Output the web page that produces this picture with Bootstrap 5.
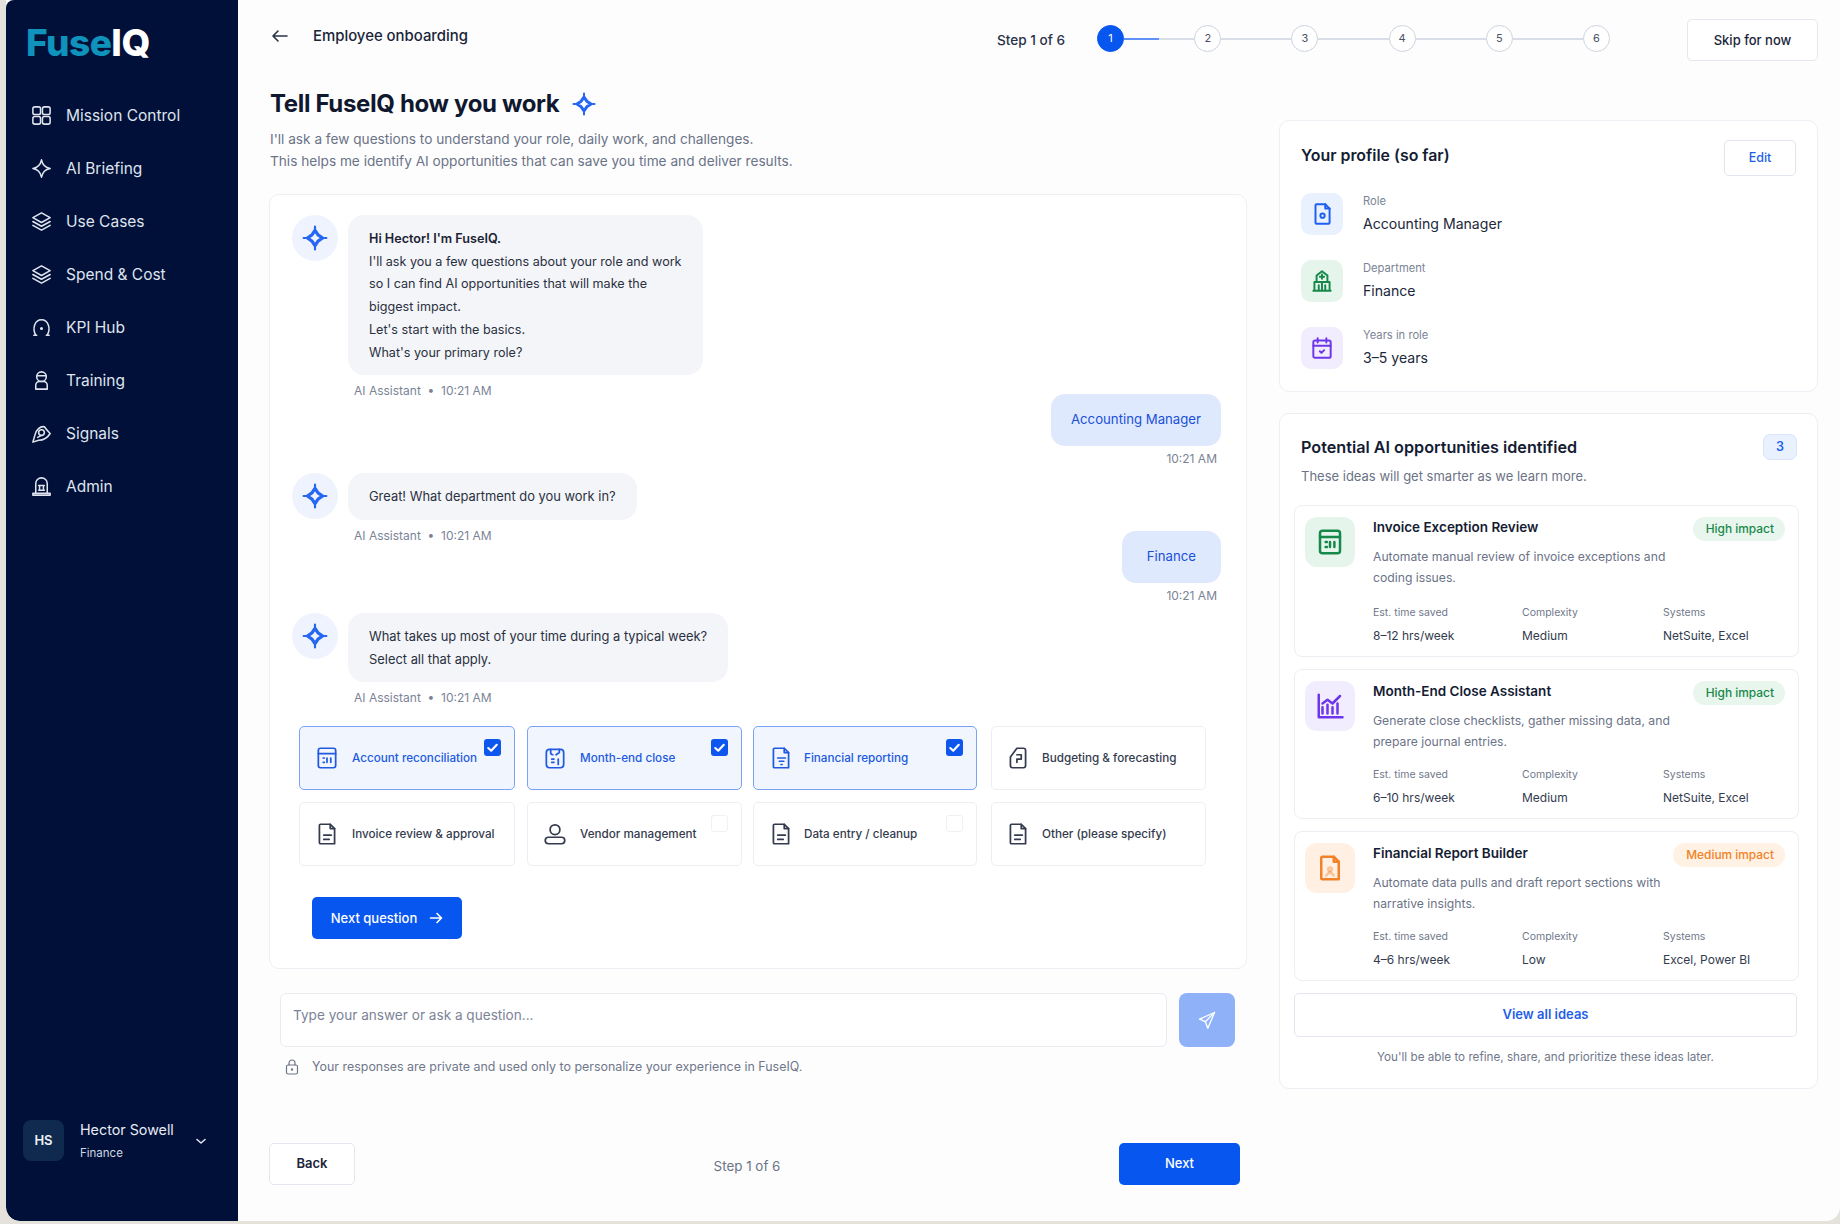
<!DOCTYPE html>
<html lang="en">
<head>
<meta charset="UTF-8" />
<meta name="viewport" content="width=device-width, initial-scale=1.0" />
<title>FuseIQ - Employee onboarding</title>
<link rel="stylesheet" href="https://cdn.jsdelivr.net/npm/bootstrap@5.3.5/dist/css/bootstrap.min.css" />
<script src="https://cdn.jsdelivr.net/npm/bootstrap@5.3.5/dist/js/bootstrap.bundle.min.js"></script>
<style>
  html, body { height: 100%; }
  body { background: #e4e2db; font-family: Inter, "Liberation Sans", sans-serif; color: #111a33; overflow: hidden; }
  svg.ico { fill: none; stroke: currentColor; stroke-width: 1.6; stroke-linecap: round; stroke-linejoin: round; flex: none; }

  .app-shell { margin-left: 6px; height: 1221px; border-radius: 0 0 14px 14px; overflow: hidden; background: #fdfdfe; }
  .side { width: 232px; flex: none; background: #011038; color: #dfe4ee; border-radius: 8px 0 0 14px; padding: 23px 0 0 21px; }
  .logo-text { font-size: 37px; line-height: 40px; font-weight: 800; letter-spacing: -.5px; margin: 0 0 26px -1px; }
  .logo-fuse { color: #0f93bd; }
  .logo-iq { color: #fff; }
  .side-link { display: flex; align-items: center; gap: 13px; height: 53px; color: #dfe4ee; font-size: 15.5px; text-decoration: none; padding-left: 3px; }
  .side-link svg { width: 23px; height: 23px; }
  .side-user { margin-top: auto; margin-bottom: 60px; margin-left: -4px; }
  .user-tile { width: 41px; height: 41px; border-radius: 8px; background: #10294f; color: #eef2f8; font-size: 13px; font-weight: 600; }
  .user-name { font-size: 14.3px; line-height: 18px; color: #e6eaf2; }
  .user-dept { font-size: 11.5px; line-height: 16px; margin-top: 6px; color: #cfd6e2; }
  .user-chev { margin-right: 31px; }

  .main-area { padding: 0 22px 0 31px; min-width: 0; }
  .top-bar { height: 60px; padding-top: 19px; margin-bottom: 27px; }
  .back-row { height: 34px; }
  .back-title { font-size: 14.9px; font-weight: 500; margin-left: 24px; color: #1b2438; }
  .back-arrow { color: #2a3347; margin-left: 2px; }
  .step-row { height: 42px; }
  .step-txt { font-size: 13.6px; font-weight: 500; color: #2a3347; }
  .steps-wrap { margin-left: 32px; margin-right: 77px; margin-top: -3px; }
  .step-dot { width: 27px; height: 27px; border-radius: 50%; border: 1px solid #cdd3de; background: #fff; font-size: 11px; color: #4a5266; flex: none; }
  .step-dot.on { background: #0756f0; border-color: #0756f0; color: #fff; }
  .step-line { width: 70.2px; height: 2px; background: #d8dde7; }
  .step-line.on { background: linear-gradient(90deg, #5f90f5 50%, #d8dde7 50%); }
  .btn-plain { background: #fff; border: 1px solid #e4e7ee; border-radius: 5px; color: #1b2438; font-weight: 500; font-size: 13px; }
  .btn-skip { width: 131px; height: 42px; padding: 2px 0 0; }

  .col-left { width: 978px; flex: none; }
  .col-right { width: 539px; flex: none; margin-left: 32px; margin-top: 33px; }
  .page-title { font-size: 24px; line-height: 34px; font-weight: 700; color: #10182f; letter-spacing: -.35px; margin: 0 0 0 1px; gap: 13px; }
  .title-spark { color: #2566f2; }
  .page-sub { font-size: 13.65px; line-height: 22px; color: #6b7386; margin: 7px 0 0 1px; }
  .panel { background: #fff; border: 1px solid #edeff4; border-radius: 10px; }
  .chat-panel { margin-top: 22px; padding: 20px 25px 29px 22px; height: 775px; }

  .bot-row { gap: 10px; }
  .spark-tile { width: 46px; height: 46px; border-radius: 50%; background: #eef3fd; color: #2566f2; flex: none; }
  .bubble { background: #f4f5f8; border-radius: 16px; padding: 13px 21px 11px; font-size: 12.9px; line-height: 22.7px; color: #2a3142; }
  .bubble-intro { font-size: 12.6px; }
  .bubble strong { font-weight: 600; color: #1b2235; }
  .bubble-user { background: #dfe9fd; color: #1850d8; border-radius: 14px; font-size: 13.2px; height: 52px; padding: 0 20px; }
  .bubble-wide { padding: 0 25px; }
  .chat-meta { font-size: 12px; line-height: 18px; color: #7b8396; margin-top: 4px; }
  .bot-meta { margin-left: 62px; margin-top: 7px; }
  .gap-before-user { margin-top: -6px; }
  .gap-before-user-2 { margin-top: -14px; }
  .gap-bot-2 { margin-top: 5px; }

  .choice-grid { display: grid; grid-template-columns: 216px 216px 224px 218px; gap: 12px 11px; margin: 19px 0 0 7px; }
  .choice-item { position: relative; height: 64px; display: flex; align-items: center; gap: 12px; padding-left: 14px; font-size: 11.7px; font-weight: 500; border: 1px solid #eceef3; border-radius: 5px; background: #fff; color: #343b4e; }
  .choice-item:nth-child(4n+2) { margin-left: 1px; }
  .choice-item:nth-child(4n+3) { gap: 10px; }
  .choice-item:nth-child(4n) { margin-left: 3px; padding-left: 13px; gap: 11px; }
  .choice-item > svg { width: 26px; height: 26px; }
  .choice-item.picked { background: #f0f5fe; border-color: #7aa3f7; color: #2159e0; }
  .tick-box { position: absolute; top: 12px; right: 13px; width: 17px; height: 17px; border-radius: 3px; background: #0d56ee; color: #fff; }
  .tick-box.blank { background: transparent; border: 1px solid #f0f1f5; }
  .btn-blue { background: #0756f0; border: 0; border-radius: 5px; color: #fff; font-size: 13px; font-weight: 500; }
  .btn-blue:hover { background: #0756f0; color: #fff; }
  .btn-nextq { width: 150px; height: 42px; margin: 31px 0 0 20px; padding: 0; }

  .ask-row { margin: 24px 12px 0 11px; gap: 12px; }
  .ask-input { height: 54px; border: 1px solid #e9ebf1; border-radius: 6px; font-size: 13.6px; padding: 0 12px 10px; }
  .ask-input::placeholder { color: #7b8396; }
  .ask-send { width: 56px; height: 54px; background: #8fb1f8; border-radius: 8px; border: 0; color: #fff; flex: none; }
  .privacy-note { margin: 11px 0 0 16px; gap: 13px; font-size: 12.45px; line-height: 18px; color: #6f7789; }
  .privacy-note svg.ico { stroke-width: 1.2; }
  .foot-row { margin: 67px 7px 0 0; }
  .btn-back { width: 86px; height: 42px; padding: 0; font-weight: 600; }
  .btn-next { width: 121px; height: 42px; padding: 0; }
  .foot-step { font-size: 13.4px; color: #6b7386; margin-left: 20px; margin-top: 4px; }

  .profile-panel { height: 272px; padding: 19px 21px 0 21px; }
  .profile-head { margin-bottom: 17px; }
  .block-title { font-size: 15.9px; line-height: 20px; font-weight: 600; color: #141c33; margin: 0; }
  .profile-head .block-title { margin-top: 6px; }
  .ideas-head .block-title { font-size: 16.2px; }
  .btn-edit { width: 72px; height: 36px; padding: 0; color: #1f5fe8; border-color: #e0e5ef; font-size: 12.5px; }
  .fact-row { gap: 20px; height: 42px; margin-bottom: 25px; }
  .fact-tile { width: 42px; height: 42px; border-radius: 10px; flex: none; }
  .fact-tile svg { width: 26px; height: 26px; }
  .fact-tile svg.ico { stroke-width: 1.8; }
  .tint-blue { background: #e9f0fe; color: #1d5ff0; }
  .tint-green { background: #e5f5ec; color: #16894a; }
  .tint-purple { background: #f1ecfe; color: #6d36ea; }
  .tint-orange { background: #fff0e3; color: #f2822a; }
  .fact-label { font-size: 11.2px; line-height: 14px; color: #7b8396; margin-top: 1px; }
  .fact-value { font-size: 14.1px; line-height: 18px; margin-top: 7px; color: #20283b; }

  .ideas-panel { margin-top: 21px; height: 676px; padding: 20px 18px 0 14px; }
  .ideas-head { padding: 0 2px 0 7px; }
  .count-chip { width: 34px; height: 26px; background: #e9f0fe; border: 1px solid #d9e5fc; border-radius: 7px; color: #1d5ff0; font-size: 12.5px; font-weight: 600; }
  .ideas-sub { font-size: 13px; line-height: 19px; color: #6b7386; margin: 7px 0 19px 7px; }
  .idea-card { border: 1px solid #eceef3; border-radius: 8px; background: #fff; padding: 11px 13px 0 10px; height: 150px; margin-bottom: 12px; gap: 18px; }
  .idea-card.tall { height: 152px; }
  .idea-tile { width: 50px; height: 50px; border-radius: 12px; flex: none; }
  .idea-tile svg { width: 30px; height: 30px; }
  .idea-tile svg.ico { stroke-width: 2; }
  .idea-name { font-size: 13.5px; line-height: 20px; font-weight: 600; color: #141c33; margin: 0; }
  .impact-chip { font-size: 11.9px; line-height: 24px; height: 24px; padding: 0 11px 0 13px; border-radius: 12px; font-weight: 500; }
  .impact-high { background: #e8f6ee; color: #17884a; }
  .impact-mid { background: #fff1e3; color: #f08227; }
  .idea-desc { font-size: 12.2px; line-height: 21px; color: #6b7386; margin: 5px 0 0; }
  .idea-stats { display: grid; grid-template-columns: 149px 141px 1fr; margin-top: 15px; }
  .idea-card.tall .idea-stats { margin-top: 17px; }
  .stat-label { font-size: 10.5px; line-height: 16px; color: #70788a; }
  .stat-value { font-size: 12px; line-height: 18px; color: #333b4e; margin-top: 6px; }
  .btn-viewall { width: 503px; height: 44px; padding: 0; color: #1f5fe8; border-color: #e2e6ee; font-size: 13px; font-weight: 600; display: block; margin-top: 2px; }
  .ideas-note { width: 503px; font-size: 11.7px; line-height: 16px; color: #70788a; margin: 12px 0 0; text-align: center; }
</style>
</head>
<body>
<svg width="0" height="0" class="position-absolute">
  <symbol id="i-grid" viewBox="0 0 24 24"><rect x="3" y="3" width="8" height="8" rx="2"/><rect x="13" y="3" width="8" height="8" rx="2"/><rect x="3" y="13" width="8" height="8" rx="2"/><rect x="13" y="13" width="8" height="8" rx="2"/></symbol>
  <symbol id="i-star" viewBox="0 0 24 24"><path d="M12 3c1 5 3.500 8 9 9-5.500 1-8 4-9 9-1-5-3.500-8-9-9 5.500-1 8-4 9-9z"/></symbol>
  <symbol id="i-layers" viewBox="0 0 24 24"><path d="M12 3l9 5-9 5-9-5z"/><path d="M3 12l9 5 9-5"/><path d="M3 16l9 5 9-5"/></symbol>
  <symbol id="i-kpi" viewBox="0 0 24 24"><path d="M6 20c-4-7-1-16 6-16s10 9 6 16"/><path d="M4 20h3M17 20h3"/><circle cx="12" cy="13" r=".8"/></symbol>
  <symbol id="i-train" viewBox="0 0 24 24"><circle cx="12" cy="8" r="5"/><path d="M6 21v-4a4 4 0 0 1 4-4h4a4 4 0 0 1 4 4v4z"/><path d="M7.500 7h9"/></symbol>
  <symbol id="i-signal" viewBox="0 0 24 24"><path d="M3 21l2-7c1-6 6-10 10-9 2 3 4 5 6 7-3 5-7 7-12 7z"/><circle cx="12" cy="11" r="3"/><path d="M8 16l4-2"/></symbol>
  <symbol id="i-admin" viewBox="0 0 24 24"><path d="M6 19V9a6 6 0 0 1 12 0v10"/><path d="M3 21h18v-2H3z"/><path d="M9 11h6M10 11v5M14 11v5M9 16h6"/></symbol>
  <symbol id="i-calc" viewBox="0 0 24 24"><rect x="4" y="3" width="16" height="18" rx="2"/><path d="M4 8h16M8.500 12h1M8.500 16h1M12 12v4M15.500 12v4"/></symbol>
  <symbol id="i-month" viewBox="0 0 24 24"><rect x="4" y="4" width="16" height="17" rx="3"/><path d="M8 4v3a2 2 0 0 0 2 2M16 4v3l-3 2M9 13h2M9 16h2M15 13v5"/></symbol>
  <symbol id="i-doc" viewBox="0 0 24 24"><path d="M6 3h9l4 4v14H6a1 1 0 0 1-1-1V4a1 1 0 0 1 1-1z"/><path d="M15 3v4h4M9 13h7M9 17h5"/></symbol>
  <symbol id="i-docf" viewBox="0 0 24 24"><path d="M6 3h9l4 4v14H6a1 1 0 0 1-1-1V4a1 1 0 0 1 1-1z"/><path d="M15 3v4h4M9 12h7M10.500 15h4M12 18h1"/></symbol>
  <symbol id="i-budget" viewBox="0 0 24 24"><path d="M11 3h6a2 2 0 0 1 2 2v14a2 2 0 0 1-2 2H7a2 2 0 0 1-2-2v-8z"/><path d="M11 9h4M15 9v4h-4v3"/></symbol>
  <symbol id="i-user" viewBox="0 0 24 24"><circle cx="12" cy="8" r="4.500"/><rect x="3" y="15" width="18" height="6" rx="3"/></symbol>
  <symbol id="i-filecog" viewBox="0 0 24 24"><path d="M7 3h8l4 4v13a1 1 0 0 1-1 1H7a1 1 0 0 1-1-1V4a1 1 0 0 1 1-1z"/><path d="M15 3v4h4"/><circle cx="12.500" cy="13.500" r="2"/></symbol>
  <symbol id="i-bank" viewBox="0 0 24 24"><path d="M4 21h16M5 21v-8h14v8M9 21v-5M12 21v-8M15 21v-5"/><path d="M7 13V7l5-4 5 4v6"/><path d="M12 6v4M10 8h4"/></symbol>
  <symbol id="i-cal" viewBox="0 0 24 24"><rect x="4" y="5" width="16" height="16" rx="1.500"/><path d="M4 10h16M8 3v4M16 3v4M10 15l1.500 1.500L14 14"/></symbol>
  <symbol id="i-chart" viewBox="0 0 24 24"><path d="M3 3v18h19"/><path d="M6 18v-5M10 18v-7M14 18v-5M18 18v-8"/><path d="M6 10l4-3 4 3 6-6"/></symbol>
  <symbol id="i-report" viewBox="0 0 24 24"><path d="M6 3h9l4 4v14H6a1 1 0 0 1-1-1V4a1 1 0 0 1 1-1z"/><path d="M15 3v4h4"/><circle cx="12" cy="13" r="1.500" opacity=".4"/><path d="M9 18l3-3 3 3" opacity=".4"/></symbol>
  <symbol id="i-spark" viewBox="0 0 24 24"><path d="M12 5l2.800 4.200L19 12l-4.200 2.800L12 19l-2.800-4.200L5 12l4.200-2.800z" stroke-width="3"/><path d="M12 1.500v2M12 20.500v2M20.500 12h2M1.500 12h2" stroke-width="2"/></symbol>
  <symbol id="i-check" viewBox="0 0 16 16"><path d="M4 8.500l2.800 2.500L12 5.500" stroke-width="2"/></symbol>
</svg>

<div class="app-shell d-flex">
  <aside class="side d-flex flex-column">
    <div class="logo-text"><span class="logo-fuse">Fuse</span><span class="logo-iq">IQ</span></div>
    <nav class="d-flex flex-column">
      <a class="side-link" href="#"><svg class="ico"><use href="#i-grid"/></svg>Mission Control</a>
      <a class="side-link" href="#"><svg class="ico"><use href="#i-star"/></svg>AI Briefing</a>
      <a class="side-link" href="#"><svg class="ico"><use href="#i-layers"/></svg>Use Cases</a>
      <a class="side-link" href="#"><svg class="ico"><use href="#i-layers"/></svg>Spend &amp; Cost</a>
      <a class="side-link" href="#"><svg class="ico"><use href="#i-kpi"/></svg>KPI Hub</a>
      <a class="side-link" href="#"><svg class="ico"><use href="#i-train"/></svg>Training</a>
      <a class="side-link" href="#"><svg class="ico"><use href="#i-signal"/></svg>Signals</a>
      <a class="side-link" href="#"><svg class="ico"><use href="#i-admin"/></svg>Admin</a>
    </nav>
    <div class="side-user d-flex align-items-center">
      <div class="user-tile d-flex align-items-center justify-content-center">HS</div>
      <div class="ms-3 flex-grow-1">
        <div class="user-name">Hector Sowell</div>
        <div class="user-dept">Finance</div>
      </div>
      <svg class="ico user-chev" width="12" height="12" viewBox="0 0 12 12"><path d="M2 4.500l4 3.500 4-3.500"/></svg>
    </div>
  </aside>

  <main class="main-area flex-grow-1">
    <div class="top-bar d-flex align-items-start">
      <div class="back-row d-flex align-items-center">
        <svg class="ico back-arrow" width="18" height="14" viewBox="0 0 18 14"><path d="M16 7H2M7 2L2 7l5 5"/></svg>
        <span class="back-title">Employee onboarding</span>
      </div>
      <div class="step-row d-flex align-items-center ms-auto">
        <span class="step-txt">Step 1 of 6</span>
        <div class="steps-wrap d-flex align-items-center">
          <div class="step-dot on d-flex align-items-center justify-content-center">1</div><div class="step-line on"></div>
          <div class="step-dot d-flex align-items-center justify-content-center">2</div><div class="step-line"></div>
          <div class="step-dot d-flex align-items-center justify-content-center">3</div><div class="step-line"></div>
          <div class="step-dot d-flex align-items-center justify-content-center">4</div><div class="step-line"></div>
          <div class="step-dot d-flex align-items-center justify-content-center">5</div><div class="step-line"></div>
          <div class="step-dot d-flex align-items-center justify-content-center">6</div>
        </div>
        <button class="btn btn-plain btn-skip">Skip for now</button>
      </div>
    </div>

    <div class="d-flex align-items-start">
      <section class="col-left">
        <h1 class="page-title d-flex align-items-center">Tell FuseIQ how you work <svg class="ico title-spark" width="24" height="24" viewBox="0 0 24 24"><use href="#i-spark"/></svg></h1>
        <p class="page-sub">I'll ask a few questions to understand your role, daily work, and challenges.<br />This helps me identify AI opportunities that can save you time and deliver results.</p>

        <div class="panel chat-panel">
          <div class="bot-row d-flex">
            <div class="spark-tile d-flex align-items-center justify-content-center"><svg class="ico" width="26" height="26"><use href="#i-spark"/></svg></div>
            <div class="bubble bubble-intro"><strong>Hi Hector! I'm FuseIQ.</strong><br />I'll ask you a few questions about your role and work<br />so I can find AI opportunities that will make the<br />biggest impact.<br />Let's start with the basics.<br />What's your primary role?</div>
          </div>
          <div class="chat-meta bot-meta">AI Assistant &nbsp;•&nbsp; 10:21 AM</div>

          <div class="gap-before-user d-flex justify-content-end"><div class="bubble-user d-flex align-items-center">Accounting Manager</div></div>
          <div class="chat-meta text-end pe-1">10:21 AM</div>

          <div class="bot-row gap-bot-2 d-flex">
            <div class="spark-tile d-flex align-items-center justify-content-center"><svg class="ico" width="26" height="26"><use href="#i-spark"/></svg></div>
            <div class="bubble">Great! What department do you work in?</div>
          </div>
          <div class="chat-meta bot-meta">AI Assistant &nbsp;•&nbsp; 10:21 AM</div>

          <div class="gap-before-user-2 d-flex justify-content-end"><div class="bubble-user bubble-wide d-flex align-items-center">Finance</div></div>
          <div class="chat-meta text-end pe-1">10:21 AM</div>

          <div class="bot-row d-flex mt-2">
            <div class="spark-tile d-flex align-items-center justify-content-center"><svg class="ico" width="26" height="26"><use href="#i-spark"/></svg></div>
            <div class="bubble">What takes up most of your time during a typical week?<br />Select all that apply.</div>
          </div>
          <div class="chat-meta bot-meta">AI Assistant &nbsp;•&nbsp; 10:21 AM</div>

          <div class="choice-grid">
            <div class="choice-item picked"><svg class="ico"><use href="#i-calc"/></svg>Account reconciliation<span class="tick-box d-flex"><svg class="ico" width="17" height="17"><use href="#i-check"/></svg></span></div>
            <div class="choice-item picked"><svg class="ico"><use href="#i-month"/></svg>Month-end close<span class="tick-box d-flex"><svg class="ico" width="17" height="17"><use href="#i-check"/></svg></span></div>
            <div class="choice-item picked"><svg class="ico"><use href="#i-docf"/></svg>Financial reporting<span class="tick-box d-flex"><svg class="ico" width="17" height="17"><use href="#i-check"/></svg></span></div>
            <div class="choice-item"><svg class="ico"><use href="#i-budget"/></svg>Budgeting &amp; forecasting</div>
            <div class="choice-item"><svg class="ico"><use href="#i-doc"/></svg>Invoice review &amp; approval</div>
            <div class="choice-item"><svg class="ico"><use href="#i-user"/></svg>Vendor management<span class="tick-box blank"></span></div>
            <div class="choice-item"><svg class="ico"><use href="#i-doc"/></svg>Data entry / cleanup<span class="tick-box blank"></span></div>
            <div class="choice-item"><svg class="ico"><use href="#i-doc"/></svg>Other (please specify)</div>
          </div>

          <button class="btn btn-blue btn-nextq d-inline-flex align-items-center justify-content-center gap-2">Next question <svg class="ico ms-1" width="14" height="14" viewBox="0 0 14 14"><path d="M1.500 7h11M8 2.500L12.500 7 8 11.500"/></svg></button>
        </div>

        <div class="ask-row d-flex">
          <input class="form-control ask-input" type="text" placeholder="Type your answer or ask a question..." />
          <button class="ask-send d-flex align-items-center justify-content-center"><svg class="ico" width="20" height="20" viewBox="0 0 24 24"><path d="M21 3L3 11l7 3 3 8z"/><path d="M21 3L10 14"/></svg></button>
        </div>
        <div class="privacy-note d-flex align-items-center">
          <svg class="ico" width="14" height="16" viewBox="0 0 14 16"><rect x="1.500" y="6" width="11" height="9" rx="1.500"/><path d="M4 6V4a3 3 0 0 1 6 0v2"/><circle cx="7" cy="10.500" r=".6"/></svg>
          Your responses are private and used only to personalize your experience in FuseIQ.
        </div>
        <div class="foot-row d-flex justify-content-between align-items-center">
          <button class="btn btn-plain btn-back">Back</button>
          <span class="foot-step">Step 1 of 6</span>
          <button class="btn btn-blue btn-next">Next</button>
        </div>
      </section>

      <section class="col-right">
        <div class="panel profile-panel">
          <div class="profile-head d-flex justify-content-between align-items-start">
            <h2 class="block-title">Your profile (so far)</h2>
            <button class="btn btn-plain btn-edit">Edit</button>
          </div>
          <div class="fact-row d-flex">
            <div class="fact-tile tint-blue d-flex align-items-center justify-content-center"><svg class="ico"><use href="#i-filecog"/></svg></div>
            <div><div class="fact-label">Role</div><div class="fact-value">Accounting Manager</div></div>
          </div>
          <div class="fact-row d-flex">
            <div class="fact-tile tint-green d-flex align-items-center justify-content-center"><svg class="ico"><use href="#i-bank"/></svg></div>
            <div><div class="fact-label">Department</div><div class="fact-value">Finance</div></div>
          </div>
          <div class="fact-row d-flex">
            <div class="fact-tile tint-purple d-flex align-items-center justify-content-center"><svg class="ico"><use href="#i-cal"/></svg></div>
            <div><div class="fact-label">Years in role</div><div class="fact-value">3–5 years</div></div>
          </div>
        </div>

        <div class="panel ideas-panel">
          <div class="ideas-head d-flex justify-content-between align-items-center">
            <h2 class="block-title">Potential AI opportunities identified</h2>
            <span class="count-chip d-flex align-items-center justify-content-center">3</span>
          </div>
          <p class="ideas-sub">These ideas will get smarter as we learn more.</p>

          <article class="idea-card tall d-flex">
            <div class="idea-tile tint-green d-flex align-items-center justify-content-center"><svg class="ico"><use href="#i-calc"/></svg></div>
            <div class="flex-grow-1">
              <div class="d-flex justify-content-between align-items-start"><h3 class="idea-name">Invoice Exception Review</h3><span class="impact-chip impact-high">High impact</span></div>
              <p class="idea-desc">Automate manual review of invoice exceptions and<br />coding issues.</p>
              <div class="idea-stats">
                <div><div class="stat-label">Est. time saved</div><div class="stat-value">8–12 hrs/week</div></div>
                <div><div class="stat-label">Complexity</div><div class="stat-value">Medium</div></div>
                <div><div class="stat-label">Systems</div><div class="stat-value">NetSuite, Excel</div></div>
              </div>
            </div>
          </article>

          <article class="idea-card d-flex">
            <div class="idea-tile tint-purple d-flex align-items-center justify-content-center"><svg class="ico"><use href="#i-chart"/></svg></div>
            <div class="flex-grow-1">
              <div class="d-flex justify-content-between align-items-start"><h3 class="idea-name">Month-End Close Assistant</h3><span class="impact-chip impact-high">High impact</span></div>
              <p class="idea-desc">Generate close checklists, gather missing data, and<br />prepare journal entries.</p>
              <div class="idea-stats">
                <div><div class="stat-label">Est. time saved</div><div class="stat-value">6–10 hrs/week</div></div>
                <div><div class="stat-label">Complexity</div><div class="stat-value">Medium</div></div>
                <div><div class="stat-label">Systems</div><div class="stat-value">NetSuite, Excel</div></div>
              </div>
            </div>
          </article>

          <article class="idea-card d-flex">
            <div class="idea-tile tint-orange d-flex align-items-center justify-content-center"><svg class="ico"><use href="#i-report"/></svg></div>
            <div class="flex-grow-1">
              <div class="d-flex justify-content-between align-items-start"><h3 class="idea-name">Financial Report Builder</h3><span class="impact-chip impact-mid">Medium impact</span></div>
              <p class="idea-desc">Automate data pulls and draft report sections with<br />narrative insights.</p>
              <div class="idea-stats">
                <div><div class="stat-label">Est. time saved</div><div class="stat-value">4–6 hrs/week</div></div>
                <div><div class="stat-label">Complexity</div><div class="stat-value">Low</div></div>
                <div><div class="stat-label">Systems</div><div class="stat-value">Excel, Power BI</div></div>
              </div>
            </div>
          </article>

          <button class="btn btn-plain btn-viewall">View all ideas</button>
          <p class="ideas-note">You'll be able to refine, share, and prioritize these ideas later.</p>
        </div>
      </section>
    </div>
  </main>
</div>
</body>
</html>
